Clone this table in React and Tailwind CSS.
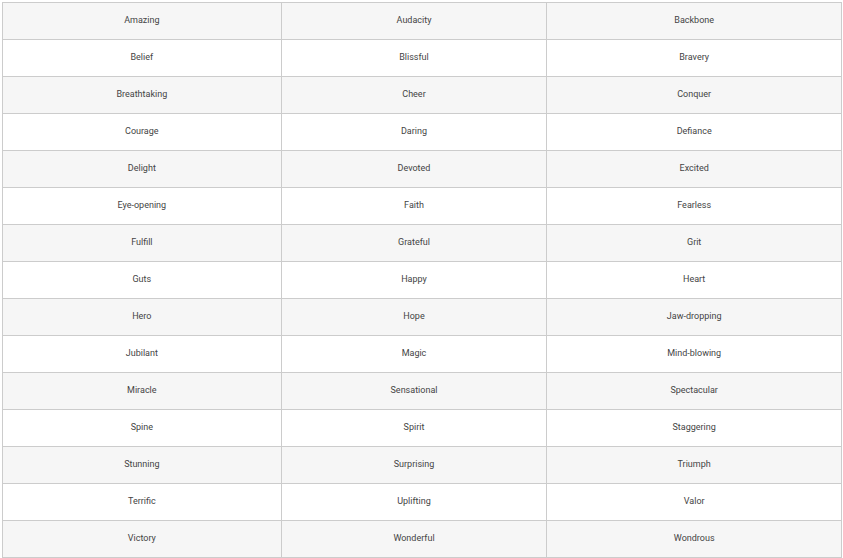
const words = [
  ["Amazing", "Audacity", "Backbone"],
  ["Belief", "Blissful", "Bravery"],
  ["Breathtaking", "Cheer", "Conquer"],
  ["Courage", "Daring", "Defiance"],
  ["Delight", "Devoted", "Excited"],
  ["Eye-opening", "Faith", "Fearless"],
  ["Fulfill", "Grateful", "Grit"],
  ["Guts", "Happy", "Heart"],
  ["Hero", "Hope", "Jaw-dropping"],
  ["Jubilant", "Magic", "Mind-blowing"],
  ["Miracle", "Sensational", "Spectacular"],
  ["Spine", "Spirit", "Staggering"],
  ["Stunning", "Surprising", "Triumph"],
  ["Terrific", "Uplifting", "Valor"],
  ["Victory", "Wonderful", "Wondrous"],
];

export default function App() {
  return (
    <div className="bg-white pl-[2px] pt-[2px]" style={{ fontFamily: "Roboto, 'Noto Sans', sans-serif" }}>
      <table className="border-collapse w-[840px] text-[9px] text-[#444]">
        <tbody>
          {words.map((row, i) => (
            <tr key={i} className={i % 2 === 0 ? "bg-[#f6f6f6]" : "bg-white"}>
              {row.map((w, j) => (
                <td
                  key={j}
                  className={
                    "border border-[#cccccc] h-[37px] p-0 pb-[1px] text-center align-middle " +
                    (j === 0 ? "w-[279px]" : j === 1 ? "w-[266px]" : "w-[295px]")
                  }
                >
                  {w}
                </td>
              ))}
            </tr>
          ))}
        </tbody>
      </table>
    </div>
  );
}
